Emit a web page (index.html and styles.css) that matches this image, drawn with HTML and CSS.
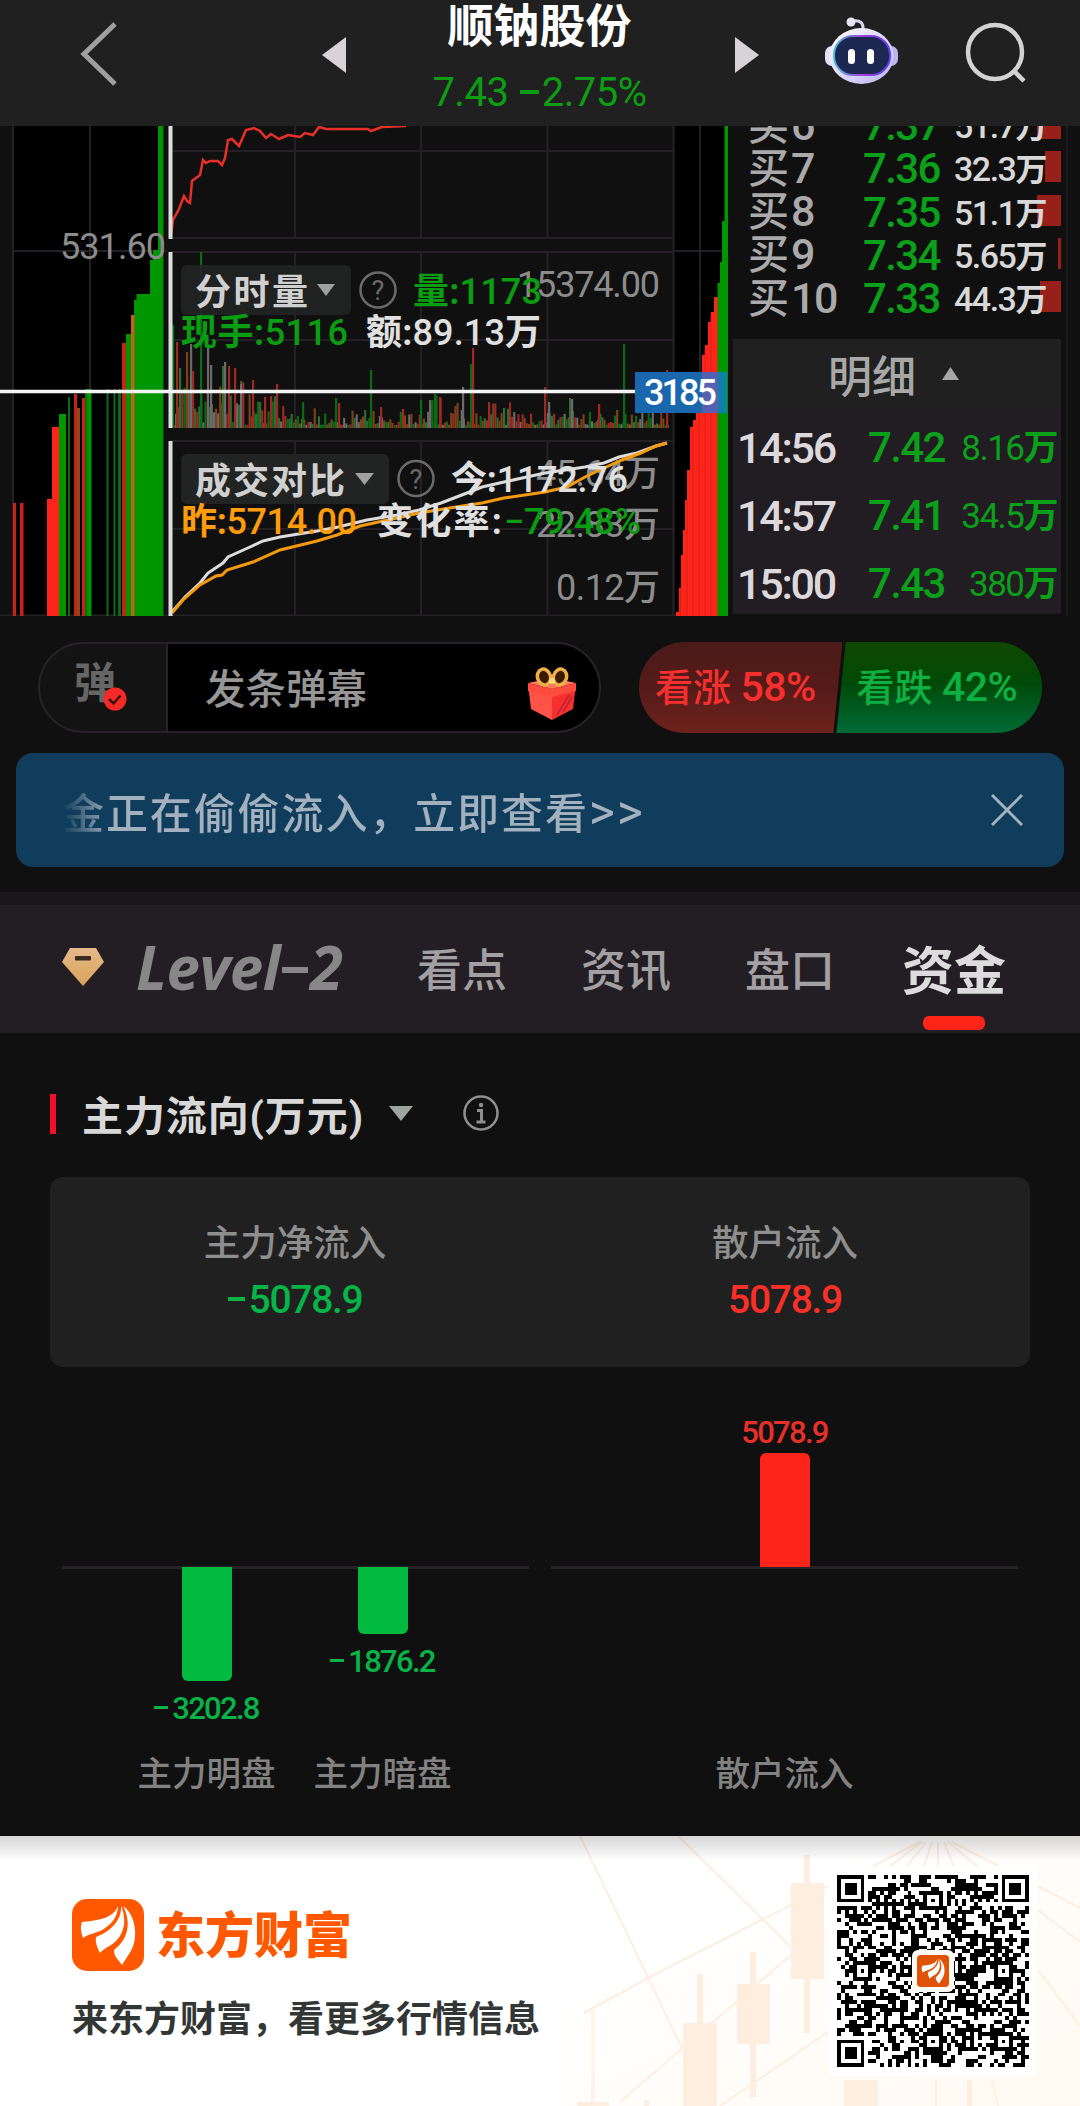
FILE: index.html
```html
<!DOCTYPE html>
<html lang="zh-CN">
<head>
    <meta charset="UTF-8">
    <meta name="viewport" content="width=device-width, initial-scale=1.0">
    <title>顺钠股份 - 资金</title>
    <link rel="stylesheet" href="styles.css">
</head>
<body>
    <!-- Header -->
    <header class="header">
        <svg class="back" width="40" height="68" viewBox="0 0 40 68"><path d="M36 4 L5 34 L36 64" fill="none" stroke="#a09fa0" stroke-width="5"/></svg>
        <svg class="prev" width="24" height="36" viewBox="0 0 24 36"><path d="M24 0 L0 18 L24 36Z" fill="#d6d2d6"/></svg>
        <div class="stock">
            <h1>顺钠股份</h1>
            <p>7.43 <i></i>2.75%</p>
        </div>
        <svg class="next" width="24" height="36" viewBox="0 0 24 36"><path d="M0 0 L24 18 L0 36Z" fill="#d6d2d6"/></svg>
        <svg class="robot" width="76" height="70" viewBox="0 0 76 70">
            <defs>
                <linearGradient id="head" x1="0" y1="0" x2="1" y2="1">
                    <stop offset="0" stop-color="#ffffff"/><stop offset="1" stop-color="#b9b3ef"/>
                </linearGradient>
                <linearGradient id="rim" x1="0" y1="0" x2="1" y2="0">
                    <stop offset="0" stop-color="#4fb9dc"/><stop offset=".5" stop-color="#a042d8"/><stop offset="1" stop-color="#5a3df0"/>
                </linearGradient>
            </defs>
            <path d="M28 5 Q40 3 39 14" fill="none" stroke="#d9d6ee" stroke-width="3"/>
            <circle cx="27" cy="6" r="4.5" fill="#e6e3f5"/>
            <rect x="1" y="30" width="14" height="20" rx="7" fill="#e4e1f7"/>
            <rect x="60" y="30" width="14" height="20" rx="7" fill="#b9b6ec"/>
            <ellipse cx="37.500" cy="40" rx="32" ry="28" fill="url(#head)"/>
            <rect x="10" y="20" width="56" height="39" rx="19" fill="#1c2852" stroke="url(#rim)" stroke-width="2"/>
            <rect x="24" y="33" width="7" height="15" rx="3.500" fill="#fff"/>
            <rect x="43" y="33" width="7" height="15" rx="3.500" fill="#fff"/>
        </svg>
        <svg class="search" width="62" height="62" viewBox="0 0 62 62"><g fill="none" stroke="#d3d3d3" stroke-width="4.500"><circle cx="30" cy="30" r="27"/><path d="M49 49 L59 59"/></g></svg>
    </header>

    <!-- Quote charts and order book -->
    <main class="market">
        <svg class="charts" width="728" height="490" viewBox="0 126 728 490">
            <rect x="13" y="126" width="151" height="490" fill="#000"/>
            <rect x="675" y="126" width="53" height="490" fill="#000"/>
            <path class="grid" d="M13 126V616 M90 126V616 M13 251H166 M700 126V400 M675 251H728 M295 126V238 M421 126V238 M547.500 126V238 M170 151H673 M170 238H673 M295 252V428 M421 252V428 M547.500 252V428 M170 252H673 M170 340H673 M295 441V615 M421 441V615 M547.500 441V615 M170 441H673 M170 529H673 M0 615.500H728 M673.500 126V615"/>

            <!-- left depth bars -->
            <path fill="#c4221b" d="M13 503h3v113h-3z M20 503h3.500v113h-3.500z M74 394h3v222h-3z M82 398h3v218h-3z M122 343h4v273h-4z"/>
            <path fill="#ff241a" d="M47 499h5V427h7V616H47z"/>
            <path fill="#009600" d="M59 414h7V616h-7z M87 389h4.500V616H87z M126 334h5v282h-5z M134 300h2.500V294H150V260h3V250h5V126h5.500V616H134z"/>
            <path fill="#0a6b10" d="M68 397h2v219h-2z M106.500 389h2v227h-2z M113.500 389h2v227h-2z M118 389h3v227h-3z M85 389h2v227h-2z"/>
            <path fill="#8a4a12" d="M77 408h3v208h-3z"/>
            <path fill="#c2621a" d="M131 315h3.500v301h-3.500z"/>
            <text class="n grey" x="60" y="259" textLength="106">531.60</text>

            <!-- right depth bars -->
            <path fill="#ff241a" d="M676 616V612H679V588H681V555H683V530H685V500H687V470H690V427H693V420H696V405H699V385H702V355H705V345H708V322H711V312H714V297H718V616z"/>
            <path fill="#009600" d="M717.500 616V283H720V262H722V221H724.500V126H728V616z"/>
            <path class="stripes" d="M680.500 590V616 M687 500V616 M693 430V616 M699 400V616 M705 350V616 M711 315V616"/>

            <!-- trend line -->
            <polyline fill="none" stroke="#e8302a" stroke-width="2.500" points="171,235 173,220 179,209 184,196 187,201 190,203 192,181 200,175 203,160 206,163 210,161 218,161 222,165 225,158 228,140 232,139 239,146 246,130 254,128 260,131 266,138 271,134 279,139 288,135 300,137 305,133 313,135 319,127 326,129 368,129 371,131 382,127 406,126"/>
            <g id="volume"></g>

            <text class="n grey" x="517" y="297" textLength="143">15374.00</text>
            <text class="n grey" x="536" y="486" textLength="124">45.64<tspan>万</tspan></text>
            <text class="n grey" x="536" y="537" textLength="124">22.83<tspan>万</tspan></text>
            <text class="n grey" x="556" y="600" textLength="104">0.12<tspan>万</tspan></text>

            <rect x="181" y="265" width="170" height="50" rx="6" fill="#222423" opacity=".9"/>
            <text class="c" x="195" y="305" textLength="113">分时量</text>
            <path d="M317 284h18l-9 12z" fill="#a0a0a0"/>
            <g class="help"><circle cx="378" cy="290" r="17.500"/><text x="378" y="300">?</text></g>
            <text class="n green" x="413" y="304" textLength="129"><tspan>量:</tspan>1173</text>
            <text class="n green" x="181" y="345" textLength="167"><tspan>现手:</tspan>5116</text>
            <text class="n light" x="366" y="345" textLength="175"><tspan>额:</tspan>89.13<tspan>万</tspan></text>

            <rect x="181" y="454" width="208" height="50" rx="6" fill="#222423"/>
            <text class="c" x="195" y="494" textLength="150">成交对比</text>
            <path d="M355 473h19l-9.500 12z" fill="#a0a0a0"/>
            <g class="help"><circle cx="416" cy="478.500" r="17.500"/><text x="416" y="488.500">?</text></g>

            <polyline fill="none" stroke="#dcdcdc" stroke-width="3" points="172,612 185,597 200,583 208,573 223,563 228,557 250,547 263,541 280,537 317,531 338,527 367,520 397,515 419,510 441,503 467,493 482,487 504,482 545,473 585,467 604,463 619,457 637,453 656,446 667,443"/>
            <polyline fill="none" stroke="#f59a0f" stroke-width="3" points="172,613 183,600 200,585 216,576 222,575 227,570 253,562 280,550 317,541 337,535 360,526 397,518 419,513 456,507 482,503 504,498 545,492 567,487 585,477 604,468 622,460 641,453 656,446 667,443"/>
            <text class="n light" x="451" y="492" textLength="177"><tspan>今:</tspan>1172.76</text>
            <text class="n orange" x="181" y="534" textLength="176"><tspan>昨:</tspan>5714.00</text>
            <text class="n light" x="377" y="534" textLength="125"><tspan>变化率:</tspan></text>
            <text class="n green" x="504" y="534" textLength="137">−79.48%</text>

            <!-- crosshair -->
            <path d="M170.500 126V239 M170.500 252V428 M170.500 441V616" stroke="#dedede" stroke-width="4"/>
            <path d="M0 391.500H640" stroke="#f4f4f4" stroke-width="3.500"/>
            <rect x="635" y="372" width="92" height="41" fill="#1a67ae"/>
            <rect x="702" y="372" width="16" height="41" fill="#5561ae"/>
            <rect x="718" y="372" width="9" height="41" fill="#0f80a8"/>
            <text class="n white" x="644" y="405" textLength="73">3185</text>
        </svg>

        <aside class="book">
            <div class="bids">
                <div class="bid"><span>买<b>6</b></span><span class="price">7.37</span><span class="vol">51.7<em>万</em></span><i style="width:24px"></i></div>
                <div class="bid"><span>买<b>7</b></span><span class="price">7.36</span><span class="vol">32.3<em>万</em></span><i style="width:16px"></i></div>
                <div class="bid"><span>买<b>8</b></span><span class="price">7.35</span><span class="vol">51.1<em>万</em></span><i style="width:24px"></i></div>
                <div class="bid"><span>买<b>9</b></span><span class="price">7.34</span><span class="vol">5.65<em>万</em></span><i style="width:3px"></i></div>
                <div class="bid"><span>买<b>10</b></span><span class="price">7.33</span><span class="vol">44.3<em>万</em></span><i style="width:21px"></i></div>
            </div>
            <div class="detail-head">明细<svg width="17" height="13" viewBox="0 0 17 13"><path d="M0 13 L8.500 0 L17 13Z" fill="#a6a6a6"/></svg></div>
            <div class="ticks">
                <div class="tick"><span class="time">14:56</span><span class="price">7.42</span><span class="vol">8.16<em>万</em></span></div>
                <div class="tick"><span class="time">14:57</span><span class="price">7.41</span><span class="vol">34.5<em>万</em></span></div>
                <div class="tick"><span class="time">15:00</span><span class="price">7.43</span><span class="vol">380<em>万</em></span></div>
            </div>
        </aside>
    </main>

    <!-- Bullet comments and sentiment -->
    <section class="social">
        <div class="danmu">
            <div class="danmu-switch">弹
                <svg class="check" width="24" height="24" viewBox="0 0 24 24"><circle cx="12" cy="12" r="11.500" fill="#f32a26"/><path d="M6 12l4.500 4.500 7-8" fill="none" stroke="#3a1210" stroke-width="2.500"/></svg>
            </div>
            <div class="danmu-input">发条弹幕
                <svg width="50" height="54" viewBox="0 0 50 54">
                    <path d="M1 17 L25 22 V53 L4 42Z" fill="#ff5348"/>
                    <path d="M49 17 L25 22 V53 L46 42Z" fill="#f5302e"/>
                    <path d="M1 16 L25 11 L49 16 L25 22Z" fill="#ff7a5c"/>
                    <path d="M1 16 L25 22 L49 16 V24 L25 30 L1 24Z" fill="#ff4a3e"/>
                    <path d="M30 48 L42 28 M36 45 L45 30" stroke="#c92233" stroke-width="2"/>
                    <g fill="#3a1a00" stroke="#eeb04a" stroke-width="3.500"><ellipse cx="17" cy="10" rx="6.500" ry="8" transform="rotate(-18 17 10)"/><ellipse cx="33" cy="10" rx="6.500" ry="8" transform="rotate(18 33 10)"/></g>
                    <circle cx="25" cy="14" r="3" fill="#ffd884"/>
                </svg>
            </div>
        </div>
        <div class="sentiment">
            <div class="up">看涨 <b>58%</b></div>
            <div class="down">看跌 <b>42%</b></div>
        </div>
    </section>

    <div class="banner">
        <p>金正在偷偷流入，立即查看<span>&gt;&gt;</span></p>
        <svg width="32" height="32" viewBox="0 0 32 32"><path d="M1 1 L31 31 M31 1 L1 31" stroke="#a3b2bf" stroke-width="3"/></svg>
    </div>

    <!-- Tabs -->
    <nav class="tabs">
        <svg class="gem" width="44" height="40" viewBox="0 0 44 40">
            <defs><linearGradient id="gold" x1="0" y1="0" x2="0" y2="1"><stop offset="0" stop-color="#e4b98a"/><stop offset="1" stop-color="#d9a45a"/></linearGradient></defs>
            <path d="M9 1 H35 L43 15 L22 39 L1 15Z" fill="url(#gold)"/><rect x="14" y="9" width="16" height="4.500" rx="1" fill="#3a2a20"/>
        </svg>
        <a class="level">Level<i></i>2</a>
        <a>看点</a>
        <a>资讯</a>
        <a>盘口</a>
        <a class="active">资金</a>
    </nav>

    <!-- Fund flow -->
    <section class="flow">
        <h2>主力流向(万元)
            <svg width="24" height="15" viewBox="0 0 24 15"><path d="M0 0H24L12 15Z" fill="#9fa3a0"/></svg>
            <svg class="info" width="38" height="38" viewBox="0 0 38 38"><g fill="none" stroke="#8f8f8f"><circle cx="19" cy="19" r="16.500" stroke-width="2.500"/><path d="M15 16.500h4.500V27 M14.500 28h9" stroke-width="3"/></g><circle cx="19" cy="11" r="2.200" fill="#8f8f8f"/></svg>
        </h2>
        <div class="summary">
            <div><span>主力净流入</span><strong class="fall"><i></i>5078.9</strong></div>
            <div><span>散户流入</span><strong class="rise">5078.9</strong></div>
        </div>
        <div class="bars">
            <div class="group">
                <div class="item">
                    <div class="above"></div>
                    <div class="below"><div class="bar" style="height:114px"></div><span><i></i>3202.8</span></div>
                    <label>主力明盘</label>
                </div>
                <div class="item">
                    <div class="above"></div>
                    <div class="below"><div class="bar" style="height:67px"></div><span><i></i>1876.2</span></div>
                    <label>主力暗盘</label>
                </div>
            </div>
            <div class="group">
                <div class="item">
                    <div class="above"><span>5078.9</span><div class="bar" style="height:114px"></div></div>
                    <div class="below"></div>
                    <label>散户流入</label>
                </div>
            </div>
        </div>
    </section>

    <!-- Footer -->
    <footer class="footer">
        <svg class="decor" width="520" height="270" viewBox="0 6 520 270">
            <defs><linearGradient id="warm" x1="0" y1="0" x2="1" y2="1"><stop offset=".3" stop-color="#fffaf0" stop-opacity="0"/><stop offset="1" stop-color="#fffaf0"/></linearGradient></defs>
            <rect y="6" width="520" height="270" fill="url(#warm)"/>
            <g stroke="#fdeee0" stroke-width="2" fill="none">
                <path d="M20 6L122 218 M118 6L230 116 M24 183L92 146L268 56 M60 272L232 124 M160 276L268 202 M360 12L302 42 M362 12L322 42 M366 12L342 42 M372 12L362 42 M378 12L378 42 M384 12L396 42 M388 12L424 42 M392 12L450 42 M478 56L520 78 M478 80L520 112 M478 140L520 196 M376 250V276 M432 250L438 276"/>
            </g>
            <g fill="#feeee0">
                <path d="M244 25h6v28h14v96h-14v54h-6v-54h-13V53h13z M190 122h6v32h14v60h-14v53h-6v-53h-13v-60h13z M137 144h6v49h14v83h-34v-83h14z M284 250h34v26h-34z M17 272h32v4H17z M407 250h5v26h-5z M84 270h5v6h-5z"/>
                <path d="M31 180h4v92h-4z" opacity=".6"/>
            </g>
        </svg>
        <div class="brand">
            <div class="logo">
                <svg width="72" height="72" viewBox="0 0 72 72">
                    <defs><g id="wing"><path d="M46 7 C42 18 30 21 10 23 C8 28 9 33 11 39 C18 34 27 34 33 29 C41 24 46 16 46 7Z"/><path d="M49 7 C50 20 40 32 24 38 C23 44 26 50 28 54 C32 49 37 48 43 43 C54 33 54 18 49 7Z"/><path d="M51 7 C60 13 64 26 63 38 C62 51 55 57 50 66 C46 60 42 58 42 51 C59 38 58 20 51 7Z"/></g></defs>
                    <rect width="72" height="72" rx="15" fill="#ff5800"/><use href="#wing" fill="#fff"/>
                </svg>
                <span>东方财富</span>
            </div>
            <p>来东方财富，看更多行情信息</p>
        </div>
        <div class="qr">
            <svg width="192" height="192" viewBox="0 0 49 49" shape-rendering="crispEdges"><path id="qr"/></svg>
            <svg class="qr-logo" width="42" height="42" viewBox="0 0 42 42"><rect width="42" height="42" rx="6" fill="#fffaf3"/><rect x="5" y="5" width="32" height="32" rx="4" fill="#e05206"/><use href="#wing" fill="#fff" transform="translate(6 6) scale(.42)"/></svg>
        </div>
    </footer>

    <script src="script.js"></script>
</body>
</html>
```

FILE: styles.css
```css
/* Global Styles */
* {
    margin: 0;
    padding: 0;
    box-sizing: border-box;
}

body {
    width: 1080px;
    background: #101010;
    color: #d8d8d8;
    font-family: Roboto, "Noto Sans CJK SC", sans-serif;
}

svg {
    display: block;
    flex: none;
}

i, em {
    font-style: normal;
}

/* Header */
.header {
    display: flex;
    height: 126px;
    background: #202020;
}

.back {
    margin: 20px 0 0 79px;
}

.prev {
    margin: 37px 0 0 203px;
}

.stock {
    width: 389px;
    padding-right: 2px;
    text-align: center;
}

.stock h1 {
    height: 66px;
    margin-top: -1px;
    font-size: 46px;
    line-height: 54px;
    font-weight: 700;
    color: #fff;
}

.stock p {
    font-size: 40px;
    line-height: 55px;
    letter-spacing: -.5px;
    color: #0b9d12;
    white-space: nowrap;
}

.stock i {
    display: inline-block;
    width: 19px;
    height: 4px;
    margin: 0 3px 12px 2px;
    background: #0b9d12;
}

.next {
    margin-top: 37px;
}

.robot {
    margin: 16px 0 0 65px;
}

.search {
    margin: 22px 0 0 65px;
}

/* Charts */
.market {
    display: flex;
    height: 490px;
    overflow: hidden;
}

.grid {
    fill: none;
    stroke: #242025;
    stroke-width: 2;
}

.stripes {
    stroke: #d91f18;
    stroke-width: 1;
}

.n {
    font-size: 36px;
    font-weight: 500;
}

.n tspan {
    font-weight: 700;
}

.c {
    font-size: 36px;
    font-weight: 700;
    fill: #d0d0d0;
}

.grey { fill: #8c8c8c; font-weight: 400; }
.grey tspan { font-weight: 500; }
.green { fill: #0a9d12; }
.light { fill: #e0e0e0; }
.orange { fill: #ff9c0a; }
.white { fill: #fff; }

.help circle {
    fill: none;
    stroke: #6a6a6a;
    stroke-width: 2.5;
}

.help text {
    fill: #6a6a6a;
    font-size: 27px;
    text-anchor: middle;
}

/* Order book */
.book {
    width: 340px;
    padding-left: 5px;
    border-right: 2px solid #1b1b1b;
}

.bids {
    height: 213px;
    overflow: hidden;
}

.bid {
    display: grid;
    grid-template-columns: 115px 91px 105px;
    align-items: center;
    position: relative;
    height: 43.3px;
    padding-left: 15px;
    font-size: 41px;
    line-height: 43px;
    font-weight: 500;
    color: #aaa;
}

.bid:first-child {
    margin-top: -24px;
}

.bid b {
    margin-left: 2px;
    font-size: 43px;
    font-weight: 500;
    letter-spacing: -1.5px;
}

.bid i {
    position: absolute;
    right: 5px;
    top: 6px;
    height: 31px;
    background: #97201b;
}

.price {
    font-size: 42px;
    font-weight: 500;
    letter-spacing: -1.6px;
    color: #0ba01a;
}

.vol {
    z-index: 1;
    font-size: 34px;
    letter-spacing: -1.5px;
    white-space: nowrap;
}

.bid .vol {
    padding-top: 3px;
    color: #d8d8d8;
}

.vol em {
    font-size: 32px;
    font-weight: 700;
}

.detail-head {
    display: flex;
    align-items: center;
    gap: 26px;
    width: 328px;
    height: 69px;
    background: #202020;
    padding-left: 95px;
    font-size: 44px;
    font-weight: 500;
    color: #a8a8a8;
}

.ticks {
    width: 328px;
    height: 206px;
    padding: 6px 3px 0 4px;
    background: #211d22;
}

.tick {
    display: grid;
    grid-template-columns: 131px 84px 106px;
    align-items: center;
    height: 68px;
    line-height: 60px;
}

.time {
    font-size: 43px;
    font-weight: 500;
    letter-spacing: -2.2px;
    color: #dcd8dc;
}

.tick .vol {
    justify-self: end;
    padding: 2px 1px 0 0;
    font-size: 35px;
    font-weight: 400;
    letter-spacing: -1.5px;
    color: #0ba01a;
}

.tick .vol em {
    font-size: 35px;
}

/* Bullet comments */
.social {
    display: flex;
    padding: 26px 38px 0;
}

.danmu {
    display: flex;
    width: 563px;
    height: 91px;
    border: 2px solid #262227;
    border-radius: 46px;
    background: #131313;
    overflow: hidden;
}

.danmu-switch {
    position: relative;
    width: 128px;
    padding-left: 34px;
    border-right: 2px solid #262227;
    font-size: 42px;
    line-height: 80px;
    font-weight: 700;
    color: #666;
}

.check {
    position: absolute;
    left: 63px;
    top: 43px;
}

.danmu-input {
    flex: 1;
    display: flex;
    justify-content: space-between;
    align-items: center;
    padding: 0 22px 3px 37px;
    background: #000;
    font-size: 40.500px;
    font-weight: 500;
    color: #969696;
}

.danmu-input svg {
    margin-top: 16px;
}

.sentiment {
    display: flex;
    width: 403px;
    height: 91px;
    margin-left: 38px;
    border-radius: 46px;
    overflow: hidden;
    font-size: 38px;
    line-height: 90px;
    font-weight: 500;
    white-space: nowrap;
}

.sentiment b {
    font-size: 41px;
    font-weight: 500;
    letter-spacing: -.5px;
}

.up {
    width: 205px;
    padding-left: 16px;
    background: linear-gradient(#4a1b19, #551b19 50%, #6d231c);
    clip-path: polygon(0 0, 100% 0, 95.5% 100%, 0 100%);
    color: #f72f2f;
}

.down {
    width: 207px;
    margin-left: -6px;
    padding-left: 20px;
    background: linear-gradient(#0f4800, #004a08 45%, #006a36);
    clip-path: polygon(4.500% 0, 100% 0, 100% 100%, 0 100%);
    color: #0fb043;
}

/* Notice banner */
.banner {
    display: flex;
    justify-content: space-between;
    align-items: center;
    height: 114px;
    margin: 20px 16px 25px;
    padding: 0 41px 0 46px;
    border-radius: 17px;
    background: #103d5c;
}

.banner p {
    padding-top: 6px;
    font-size: 42px;
    line-height: 60px;
    letter-spacing: 1.9px;
    font-weight: 500;
    background: linear-gradient(90deg, #103d5c, #a3b1be 50px);
    background-clip: text;
    -webkit-background-clip: text;
    color: transparent;
}

.banner span {
    font-size: 50px;
    font-weight: 400;
}

/* Tabs */
.tabs {
    display: flex;
    align-items: center;
    height: 141px;
    padding: 10px 0 0 61px;
    border-top: 13px solid #1a171c;
    background: #221e23;
    font-size: 45px;
    font-weight: 500;
    color: #a2a0a2;
}

.gem {
    margin-top: -14px;
}

.tabs a {
    margin-right: 74px;
    margin-top: -14px;
}

.tabs .level {
    width: 207px;
    margin-left: 31px;
    font-family: "Open Sans", sans-serif;
    font-size: 60px;
    font-style: italic;
    font-weight: 700;
    letter-spacing: -.5px;
    color: #878787;
    white-space: nowrap;
}

.level i {
    display: inline-block;
    width: 26px;
    height: 6px;
    margin: 0 2px 17px;
    background: #878787;
}

.tabs .active {
    position: relative;
    margin-left: -7px;
    margin-right: 0;
    font-size: 52px;
    font-weight: 700;
    color: #dcdcdc;
}

.active::after {
    content: "";
    position: absolute;
    left: 21px;
    bottom: -25px;
    width: 62px;
    height: 14px;
    border-radius: 6px;
    background: #ff2418;
}

/* Fund flow */
.flow {
    height: 803px;
    padding: 61px 50px 0;
}

.flow h2 {
    display: flex;
    align-items: center;
    height: 40px;
    padding: 0 0 2px 26px;
    border-left: 6px solid #f0102a;
    font-size: 41px;
    font-weight: 700;
    letter-spacing: .9px;
}

.flow h2 svg {
    margin-left: 25px;
}

.flow h2 .info {
    margin-left: 49px;
}

.summary {
    display: grid;
    grid-template-columns: 1fr 1fr;
    height: 190px;
    margin-top: 43px;
    padding-top: 41px;
    border-radius: 13px;
    background: #202020;
    text-align: center;
}

.summary span {
    display: block;
    font-size: 36.500px;
    line-height: 52px;
    font-weight: 500;
    color: #8e8e8e;
}

.summary strong {
    display: block;
    font-size: 39px;
    line-height: 60px;
    font-weight: 500;
    letter-spacing: -1.3px;
}

.fall { color: #07b448; }
.rise { color: #fa3028; }

.fall i, .below i {
    display: inline-block;
    width: 17px;
    height: 4px;
    margin: 0 4px 12px 0;
    background: #07b448;
}

.bars {
    display: grid;
    grid-template-columns: 467px 467px;
    gap: 22px;
    padding-left: 12px;
}

.group {
    display: flex;
    justify-content: center;
    background: linear-gradient(#262227, #262227) 0 199px / 100% 3px no-repeat;
}

.group:first-child {
    padding-right: 2px;
}

.item {
    width: 176px;
}

.above, .below {
    display: flex;
    flex-direction: column;
    align-items: center;
    height: 200px;
    font-size: 31px;
    font-weight: 500;
    letter-spacing: -1.7px;
}

.above {
    justify-content: flex-end;
    color: #e8302a;
}

.above span {
    margin-bottom: 2px;
}

.below {
    height: 174px;
    color: #07b448;
}

.below span {
    margin-top: 9px;
}

.below i {
    width: 14px;
    height: 3px;
    margin: 0 4px 10px 0;
}

.bar {
    width: 50px;
    border-radius: 6px 6px 0 0;
    background: #ff241a;
}

.below .bar {
    border-radius: 0 0 6px 6px;
    background: #00bb40;
}

.item label {
    display: block;
    text-align: center;
    font-size: 34.500px;
    line-height: 66px;
    font-weight: 500;
    color: #828282;
}

/* Footer */
.footer {
    position: relative;
    display: flex;
    justify-content: space-between;
    height: 270px;
    background: #fff;
}

.footer::before {
    content: "";
    position: absolute;
    left: 0;
    top: 0;
    width: 100%;
    height: 24px;
    background: linear-gradient(rgba(0, 0, 0, .16), rgba(0, 0, 0, .03) 85%, transparent);
    z-index: 1;
}

.decor {
    position: absolute;
    right: 0;
    top: 0;
}

.brand {
    padding: 63px 0 0 72px;
}

.logo {
    display: flex;
    align-items: center;
    gap: 12px;
    height: 72px;
    font-size: 49px;
    font-weight: 900;
    color: #ff5800;
}

.logo span {
    margin-top: -7px;
}

.brand p {
    margin-top: 23px;
    font-size: 36px;
    line-height: 52px;
    font-weight: 700;
    color: #323634;
}

.qr {
    position: relative;
    width: 208px;
    height: 210px;
    margin: 30px 43px 0 0;
    padding: 9px 8px;
    background: #fff;
}

.qr-logo {
    position: absolute;
    left: 83px;
    top: 84px;
}
```

FILE: script.js
```js
// small seeded generator so the drawing is the same on each load
let seed = 7;
function rand() {
    seed = (seed * 16807) % 2147483647;
    return seed / 2147483647;
}

// Volume bars, baseline at y = 428
const colors = ['#0b6b14', '#9c2a20', '#6a6a6a', '#7d4318', '#2f6b34'];
let bars = '';
function volBar(x, h, color, w) {
    bars += `<rect x="${x}" y="${428 - h}" width="${w}" height="${h}" fill="${color}"/>`;
}
for (let x = 173; x < 668; x += 2.1) {
    let max = 20;
    if (x < 215) max = 60;
    else if (x < 250) max = 52;
    else if (x < 284) max = 38;
    else if (x > 425 && x < 515) max = 32;
    else if (x > 640) max = 28;
    volBar(x, 3 + rand() * (x < 260 ? 0.6 + rand() * 0.4 : rand()) * max, colors[Math.floor(rand() * 5)], 2.1);
}
const spikes = [
    [172, 103, 0], [176, 86, 1], [179, 60, 4], [186, 76, 3], [190, 84, 2], [192, 57, 1], [200, 176, 0],
    [207, 84, 2], [210, 63, 2], [222, 62, 4], [224, 66, 2], [228, 62, 1], [234, 60, 1], [240, 44, 2],
    [252, 48, 1], [264, 31, 1], [270, 32, 1], [276, 44, 1], [302, 26, 0], [335, 30, 0], [338, 25, 1],
    [370, 58, 0], [380, 21, 1], [402, 19, 1], [420, 28, 0], [429, 28, 2], [434, 34, 0], [439, 31, 1],
    [462, 41, 2], [470, 64, 0], [472, 80, 1], [488, 26, 1], [503, 20, 4], [544, 41, 1], [548, 26, 2],
    [569, 30, 4], [571, 29, 2], [598, 24, 1], [623, 84, 0], [666, 58, 1]
];
spikes.forEach(s => volBar(s[0], s[1], colors[s[2]], 2.2));
document.getElementById('volume').innerHTML = bars;

// QR code, 49 x 49 modules
const size = 49;
const grid = [];
for (let y = 0; y < size; y++) {
    grid.push([]);
    for (let x = 0; x < size; x++) grid[y].push(rand() > 0.49);
}
function square(cx, cy, r) {
    for (let y = -r; y <= r; y++) {
        for (let x = -r; x <= r; x++) {
            if (!grid[cy + y] || cx + x < 0 || cx + x >= size) continue;
            const d = Math.max(Math.abs(x), Math.abs(y));
            grid[cy + y][cx + x] = r === 4 ? (d !== 4 && d !== 2) : d !== 1;
        }
    }
}
for (let i = 8; i < size - 8; i++) {
    grid[6][i] = grid[i][6] = i % 2 === 0;
}
[[24, 6], [6, 24], [42, 24], [24, 42], [42, 42]].forEach(p => square(p[0], p[1], 2));
[[3, 3], [45, 3], [3, 45]].forEach(p => square(p[0], p[1], 4));
let d = '';
grid.forEach((row, y) => row.forEach((on, x) => {
    if (on) d += `M${x} ${y}h1v1h-1z`;
}));
document.getElementById('qr').setAttribute('d', d);
```
